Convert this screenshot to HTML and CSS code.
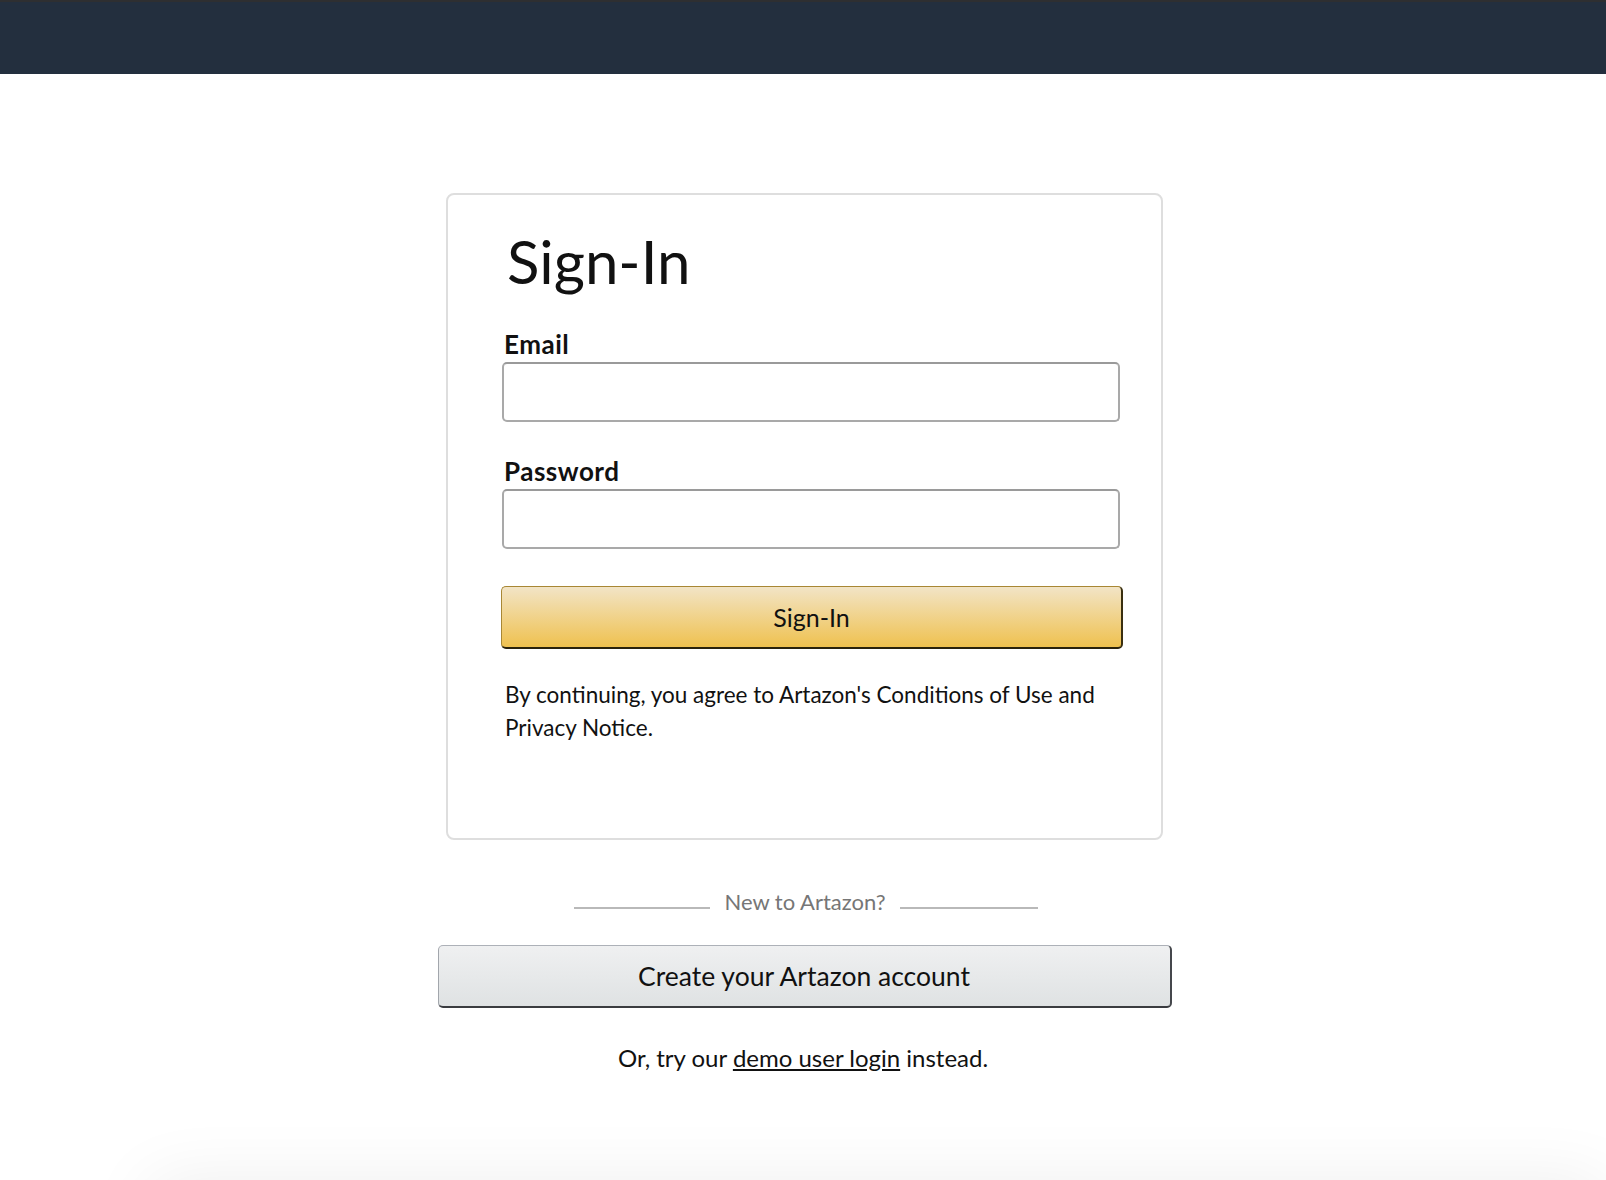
FILE: index.html
```html
<!DOCTYPE html>
<html lang="en">
<head>
<meta charset="utf-8">
<title>Artazon Sign-In</title>
<link rel="stylesheet" href="styles.css">
</head>
<body>
<header class="topbar"></header>
<main class="page">
  <section class="card">
    <h1 class="card-title">Sign-In</h1>
    <form class="form">
      <label class="field-label" for="email">Email</label>
      <input class="field-input" id="email" type="email">
      <label class="field-label field-label--second" for="password">Password</label>
      <input class="field-input" id="password" type="password">
      <button class="btn-primary" type="button">Sign-In</button>
    </form>
    <p class="terms">By continuing, you agree to Artazon's Conditions of Use and Privacy Notice.</p>
  </section>
  <div class="divider">
    <span class="divider-line divider-line--left"></span>
    <span class="divider-text">New to Artazon?</span>
    <span class="divider-line divider-line--right"></span>
  </div>
  <button class="btn-secondary" type="button">Create your Artazon account</button>
  <p class="demo">Or, try our <a class="demo-link" href="#">demo user login</a> instead.</p>
  <footer class="footer"></footer>
</main>
</body>
</html>
```
FILE: styles.css
```css
* { box-sizing: border-box; }
html, body { margin: 0; padding: 0; background: #fff; }
body {
  font-family: Lato, "Liberation Sans", sans-serif;
  color: #111;
  overflow: hidden;
}
.topbar {
  height: 74px;
  background: #232f3e;
  border-top: 2px solid #2e2f31;
}
.page {
  display: flex;
  flex-direction: column;
  align-items: center;
}
.card {
  width: 717px;
  margin-top: 119px;
  margin-left: 3px;
  border: 2px solid #dedede;
  border-radius: 8px;
  padding: 36px 36px 94px 54px;
}
.card-title {
  margin: 0 0 38px 5px;
  font-size: 60px;
  line-height: 60px;
  font-weight: 400;
  color: #111;
}
.form {
  display: flex;
  flex-direction: column;
  align-items: flex-start;
}
.field-label {
  display: block;
  font-size: 26px;
  line-height: 30px;
  font-weight: 700;
  letter-spacing: 0.5px;
  padding-left: 2px;
  margin-bottom: 3px;
}
.field-label--second { margin-top: 34px; }
.field-input {
  width: 618px;
  height: 60px;
  border: 2px solid #a9a9a9;
  border-top-color: #9a9a9a;
  border-radius: 5px;
  background: #fff;
  font: inherit;
  font-size: 22px;
  padding: 0 12px;
  outline: none;
}
.btn-primary {
  margin-top: 37px;
  margin-left: -1px;
  width: 622px;
  height: 63px;
  border-style: solid;
  border-width: 1px 2px 2px 1px;
  border-color: #a88734 #3a2f10 #2a220b #a88734;
  border-radius: 5px;
  background: linear-gradient(to bottom, #f2e4c6, #efc14f);
  font-family: inherit;
  font-size: 25px;
  color: #111;
  cursor: pointer;
}
.terms {
  margin: 29px 0 0;
  padding-left: 3px;
  font-size: 22.5px;
  line-height: 33px;
}
.divider {
  margin-top: 47px;
  margin-left: 6px;
  display: flex;
  align-items: flex-start;
  gap: 14px;
}
.divider-line {
  margin-top: 20px;
  height: 2px;
  background: #b9b9b9;
}
.divider-line--left { width: 136px; }
.divider-line--right { width: 138px; }
.divider-text {
  font-size: 22px;
  line-height: 30px;
  color: #767676;
}
.btn-secondary {
  margin-top: 28px;
  margin-left: 3px;
  width: 734px;
  height: 63px;
  border-style: solid;
  border-width: 1px 2px 2px 1px;
  border-color: #adb1b8 #45474c #3a3c40 #a2a6ac;
  border-radius: 5px;
  background: linear-gradient(to bottom, #eff0f1, #dfe2e3);
  font-family: inherit;
  font-size: 26.5px;
  color: #111;
  cursor: pointer;
}
.demo {
  margin: 35px 0 0;
  font-size: 24px;
  line-height: 30px;
}
.demo-link {
  color: #111;
  text-decoration: underline;
}
.footer {
  margin-top: 108px;
  align-self: stretch;
  margin-left: 150px;
  height: 200px;
  box-shadow: 0 0 70px rgba(0, 0, 0, 0.07);
}
```
